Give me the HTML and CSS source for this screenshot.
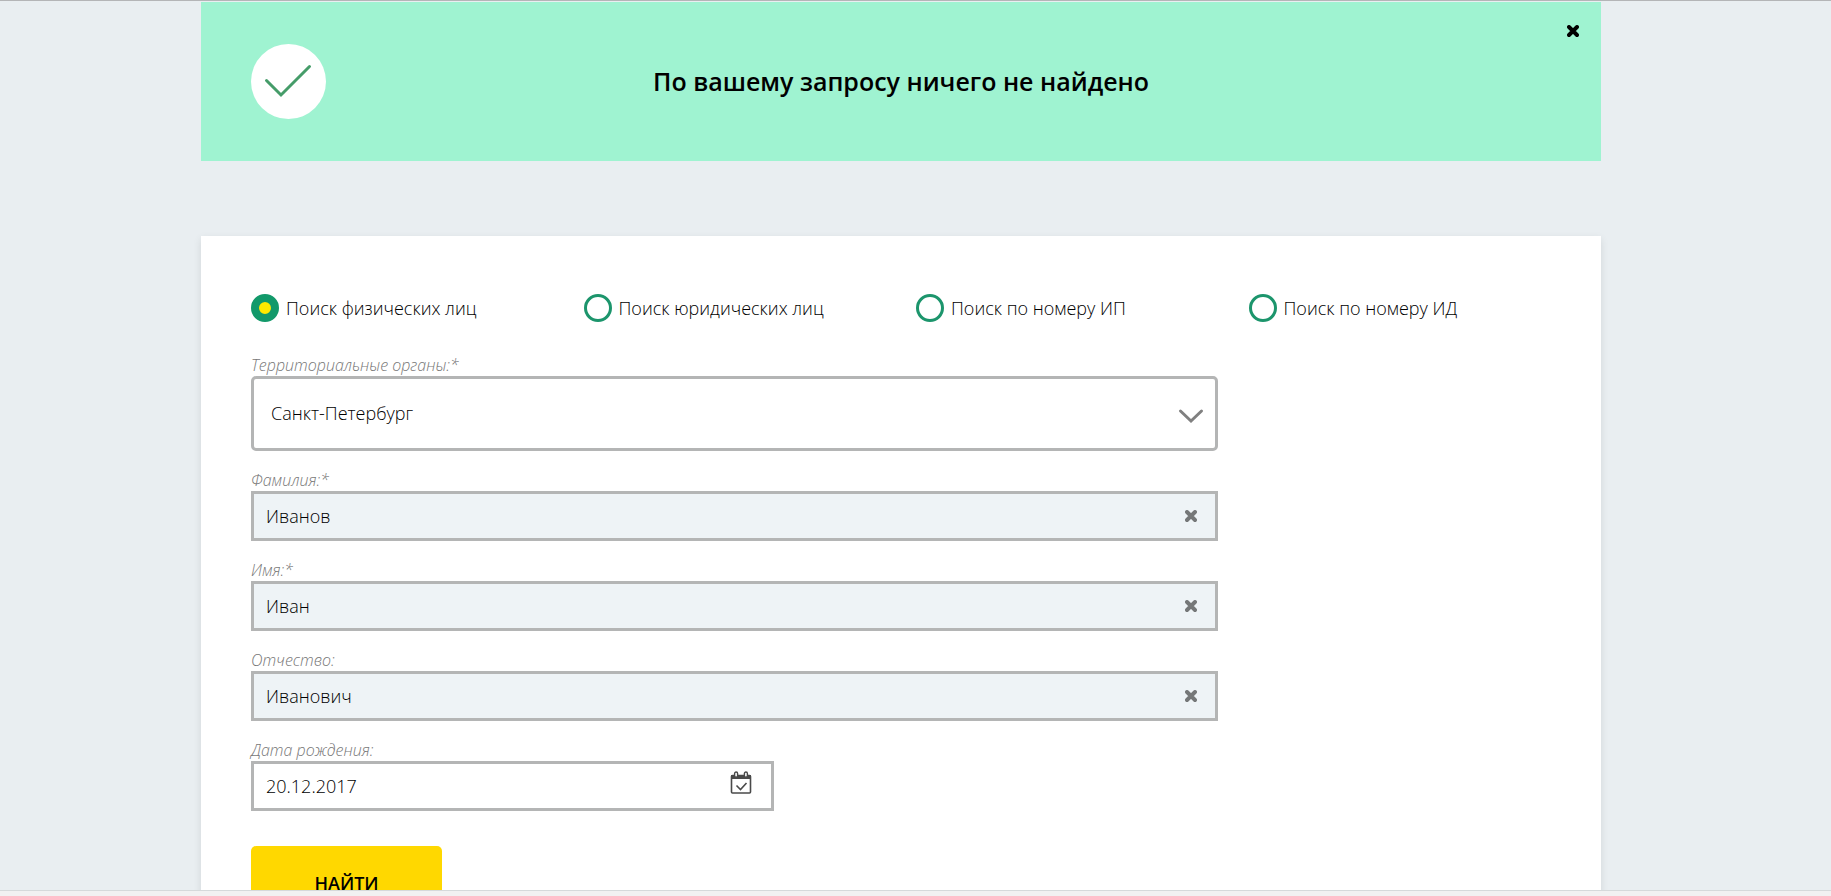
FILE: index.html
```html
<!DOCTYPE html>
<html lang="ru">
<head>
<meta charset="utf-8">
<meta name="viewport" content="width=device-width, initial-scale=1">
<title>Поиск</title>
<link rel="stylesheet" href="styles.css">
</head>
<body>
<svg class="sprite" aria-hidden="true">
  <symbol id="cross" viewBox="0 0 12 12"><path d="M2 2l8 8M10 2l-8 8" fill="none" stroke="currentColor" stroke-width="3.9" stroke-linecap="round"/></symbol>
</svg>
<main class="page">
  <section class="notice" role="status">
    <svg class="notice-icon" viewBox="0 0 75 75" aria-hidden="true">
      <circle cx="37.5" cy="37.5" r="37.5" fill="#fff"/>
      <path d="M15.500 36.500L30 51L58.500 22.500" fill="none" stroke="#459c69" stroke-width="3" stroke-linecap="round"/>
    </svg>
    <h1 class="notice-title">По вашему запросу ничего не найдено</h1>
    <button class="notice-close" type="button" aria-label="Закрыть"><svg class="cross"><use href="#cross"/></svg></button>
  </section>

  <form class="card">
    <div class="modes" role="radiogroup" aria-label="Вид поиска">
      <label class="mode"><input class="mode-input" type="radio" name="mode" checked>Поиск физических лиц</label>
      <label class="mode"><input class="mode-input" type="radio" name="mode">Поиск юридических лиц</label>
      <label class="mode"><input class="mode-input" type="radio" name="mode">Поиск по номеру ИП</label>
      <label class="mode"><input class="mode-input" type="radio" name="mode">Поиск по номеру ИД</label>
    </div>

    <div class="fields">
      <div class="field">
        <label class="field-label" for="region">Территориальные органы:*</label>
        <div class="control control-select">
          <select class="control-input" id="region"><option>Санкт-Петербург</option></select>
          <svg class="chevron" viewBox="0 0 26 16" aria-hidden="true"><path d="M2.500 3L13 13L23.500 3" fill="none" stroke="#808080" stroke-width="3" stroke-linecap="round"/></svg>
        </div>
      </div>
      <div class="field">
        <label class="field-label" for="surname">Фамилия:*</label>
        <div class="control control-filled">
          <input class="control-input" id="surname" type="text" value="Иванов">
          <button class="control-button" type="button" aria-label="Очистить фамилию"><svg class="cross"><use href="#cross"/></svg></button>
        </div>
      </div>
      <div class="field">
        <label class="field-label" for="name">Имя:*</label>
        <div class="control control-filled">
          <input class="control-input" id="name" type="text" value="Иван">
          <button class="control-button" type="button" aria-label="Очистить имя"><svg class="cross"><use href="#cross"/></svg></button>
        </div>
      </div>
      <div class="field">
        <label class="field-label" for="patronymic">Отчество:</label>
        <div class="control control-filled">
          <input class="control-input" id="patronymic" type="text" value="Иванович">
          <button class="control-button" type="button" aria-label="Очистить отчество"><svg class="cross"><use href="#cross"/></svg></button>
        </div>
      </div>
      <div class="field field-date">
        <label class="field-label" for="birthday">Дата рождения:</label>
        <div class="control">
          <input class="control-input" id="birthday" type="text" value="20.12.2017">
          <button class="control-button" type="button" aria-label="Открыть календарь">
            <svg class="calendar" viewBox="0 0 22 23" fill="none" stroke="#4a4a4a">
              <rect x="1.500" y="4.500" width="19" height="17.500" rx="1" stroke-width="1.600"/>
              <path d="M1 4h20v4H1z" fill="#4a4a4a" stroke="none"/>
              <rect x="4.600" y="1" width="3" height="5.200" rx="1.500" fill="#fff" stroke-width="1.400"/>
              <rect x="14.400" y="1" width="3" height="5.200" rx="1.500" fill="#fff" stroke-width="1.400"/>
              <path d="M6.500 14.500l4 4l6-6.500" stroke-width="1.600"/>
            </svg>
          </button>
        </div>
      </div>
    </div>
    <button class="submit" type="submit">НАЙТИ</button>
  </form>
</main>
<footer class="bottom-bar"></footer>
</body>
</html>
```
FILE: styles.css
```css
* { box-sizing: border-box; }

body {
  display: flex;
  flex-direction: column;
  height: 100vh;
  margin: 0;
  border-top: 1px solid #b4b5b7;
  background: #e9eef1;
  color: #000;
  font: 300 18px/28px "Open Sans", "Noto Sans", sans-serif;
}

button, input, select { font: inherit; color: inherit; }

button {
  padding: 0;
  border: 0;
  background: none;
  cursor: pointer;
}

.sprite { display: none; }

.page {
  flex: 1;
  min-height: 0;
  overflow: hidden;
  padding: 1px 29px 0 0;
}

.notice, .card {
  max-width: 1400px;
  margin: 0 auto;
  padding: 0 50px;
}

.notice {
  position: relative;
  display: flex;
  align-items: center;
  padding-top: 42px;
  padding-bottom: 42px;
  background: #9ff3d1;
}

.notice-icon { width: 75px; height: 75px; flex: none; }

.notice-title {
  flex: 1;
  margin: 0;
  padding: 0 75px 2px 0;
  font-size: 25px;
  font-weight: 600;
  line-height: 32px;
  text-align: center;
}

.notice-close {
  position: absolute;
  top: 17px;
  right: 16px;
  display: flex;
  align-items: center;
  justify-content: center;
  width: 24px;
  height: 24px;
}

.cross { display: block; width: 12px; height: 12px; }

.card {
  margin-top: 75px;
  padding-top: 58px;
  padding-bottom: 58px;
  background: #fff;
  box-shadow: 0 3px 8px rgba(0, 0, 0, 0.1);
}

.modes {
  display: grid;
  grid-template-columns: repeat(4, 1fr);
  gap: 30px;
}

.mode { display: flex; align-items: center; gap: 7px; }

.mode-input {
  appearance: none;
  flex: none;
  width: 28px;
  height: 28px;
  margin: 0;
  border: 3px solid #1c956c;
  border-radius: 50%;
  background: #fff;
}

.mode-input:checked {
  border-width: 8px;
  border-color: #12996a;
  background: #ffe900;
}

.fields {
  display: grid;
  gap: 18px;
  width: calc(75% - 8px);
  margin-top: 32px;
}

.field-date { width: calc(54% + 1px); }

.field-label {
  display: block;
  color: #777;
  font-size: 16px;
  font-style: italic;
  line-height: 22px;
}

.control {
  display: flex;
  align-items: center;
  height: 50px;
  padding: 0 12px 0 0;
  border: 3px solid #b4b5b5;
  background: #fff;
}

.control-filled { background: #eef3f6; }

.control-select {
  position: relative;
  height: 75px;
  padding: 0;
  border-radius: 5px;
}

.control-input {
  appearance: none;
  flex: 1;
  min-width: 0;
  height: 100%;
  padding: 0 12px;
  border: 0;
  background: transparent;
}

.control-select .control-input { padding: 0 50px 2px 17px; }

.chevron {
  position: absolute;
  top: 29px;
  right: 11px;
  width: 26px;
  height: 16px;
  pointer-events: none;
}

.control-button {
  display: flex;
  align-items: center;
  justify-content: center;
  width: 24px;
  height: 24px;
  color: #757778;
}

.field-date .control { padding-right: 18px; }

.calendar { width: 22px; height: 23px; margin-bottom: 8px; }

.submit {
  width: 191px;
  height: 75px;
  margin-top: 35px;
  padding-bottom: 2px;
  border-radius: 5px;
  background: #ffd800;
  font-weight: 600;
}

.bottom-bar {
  flex: none;
  height: 6px;
  border-top: 1px solid #d5d9da;
  background: #f1f1f1;
}
```
